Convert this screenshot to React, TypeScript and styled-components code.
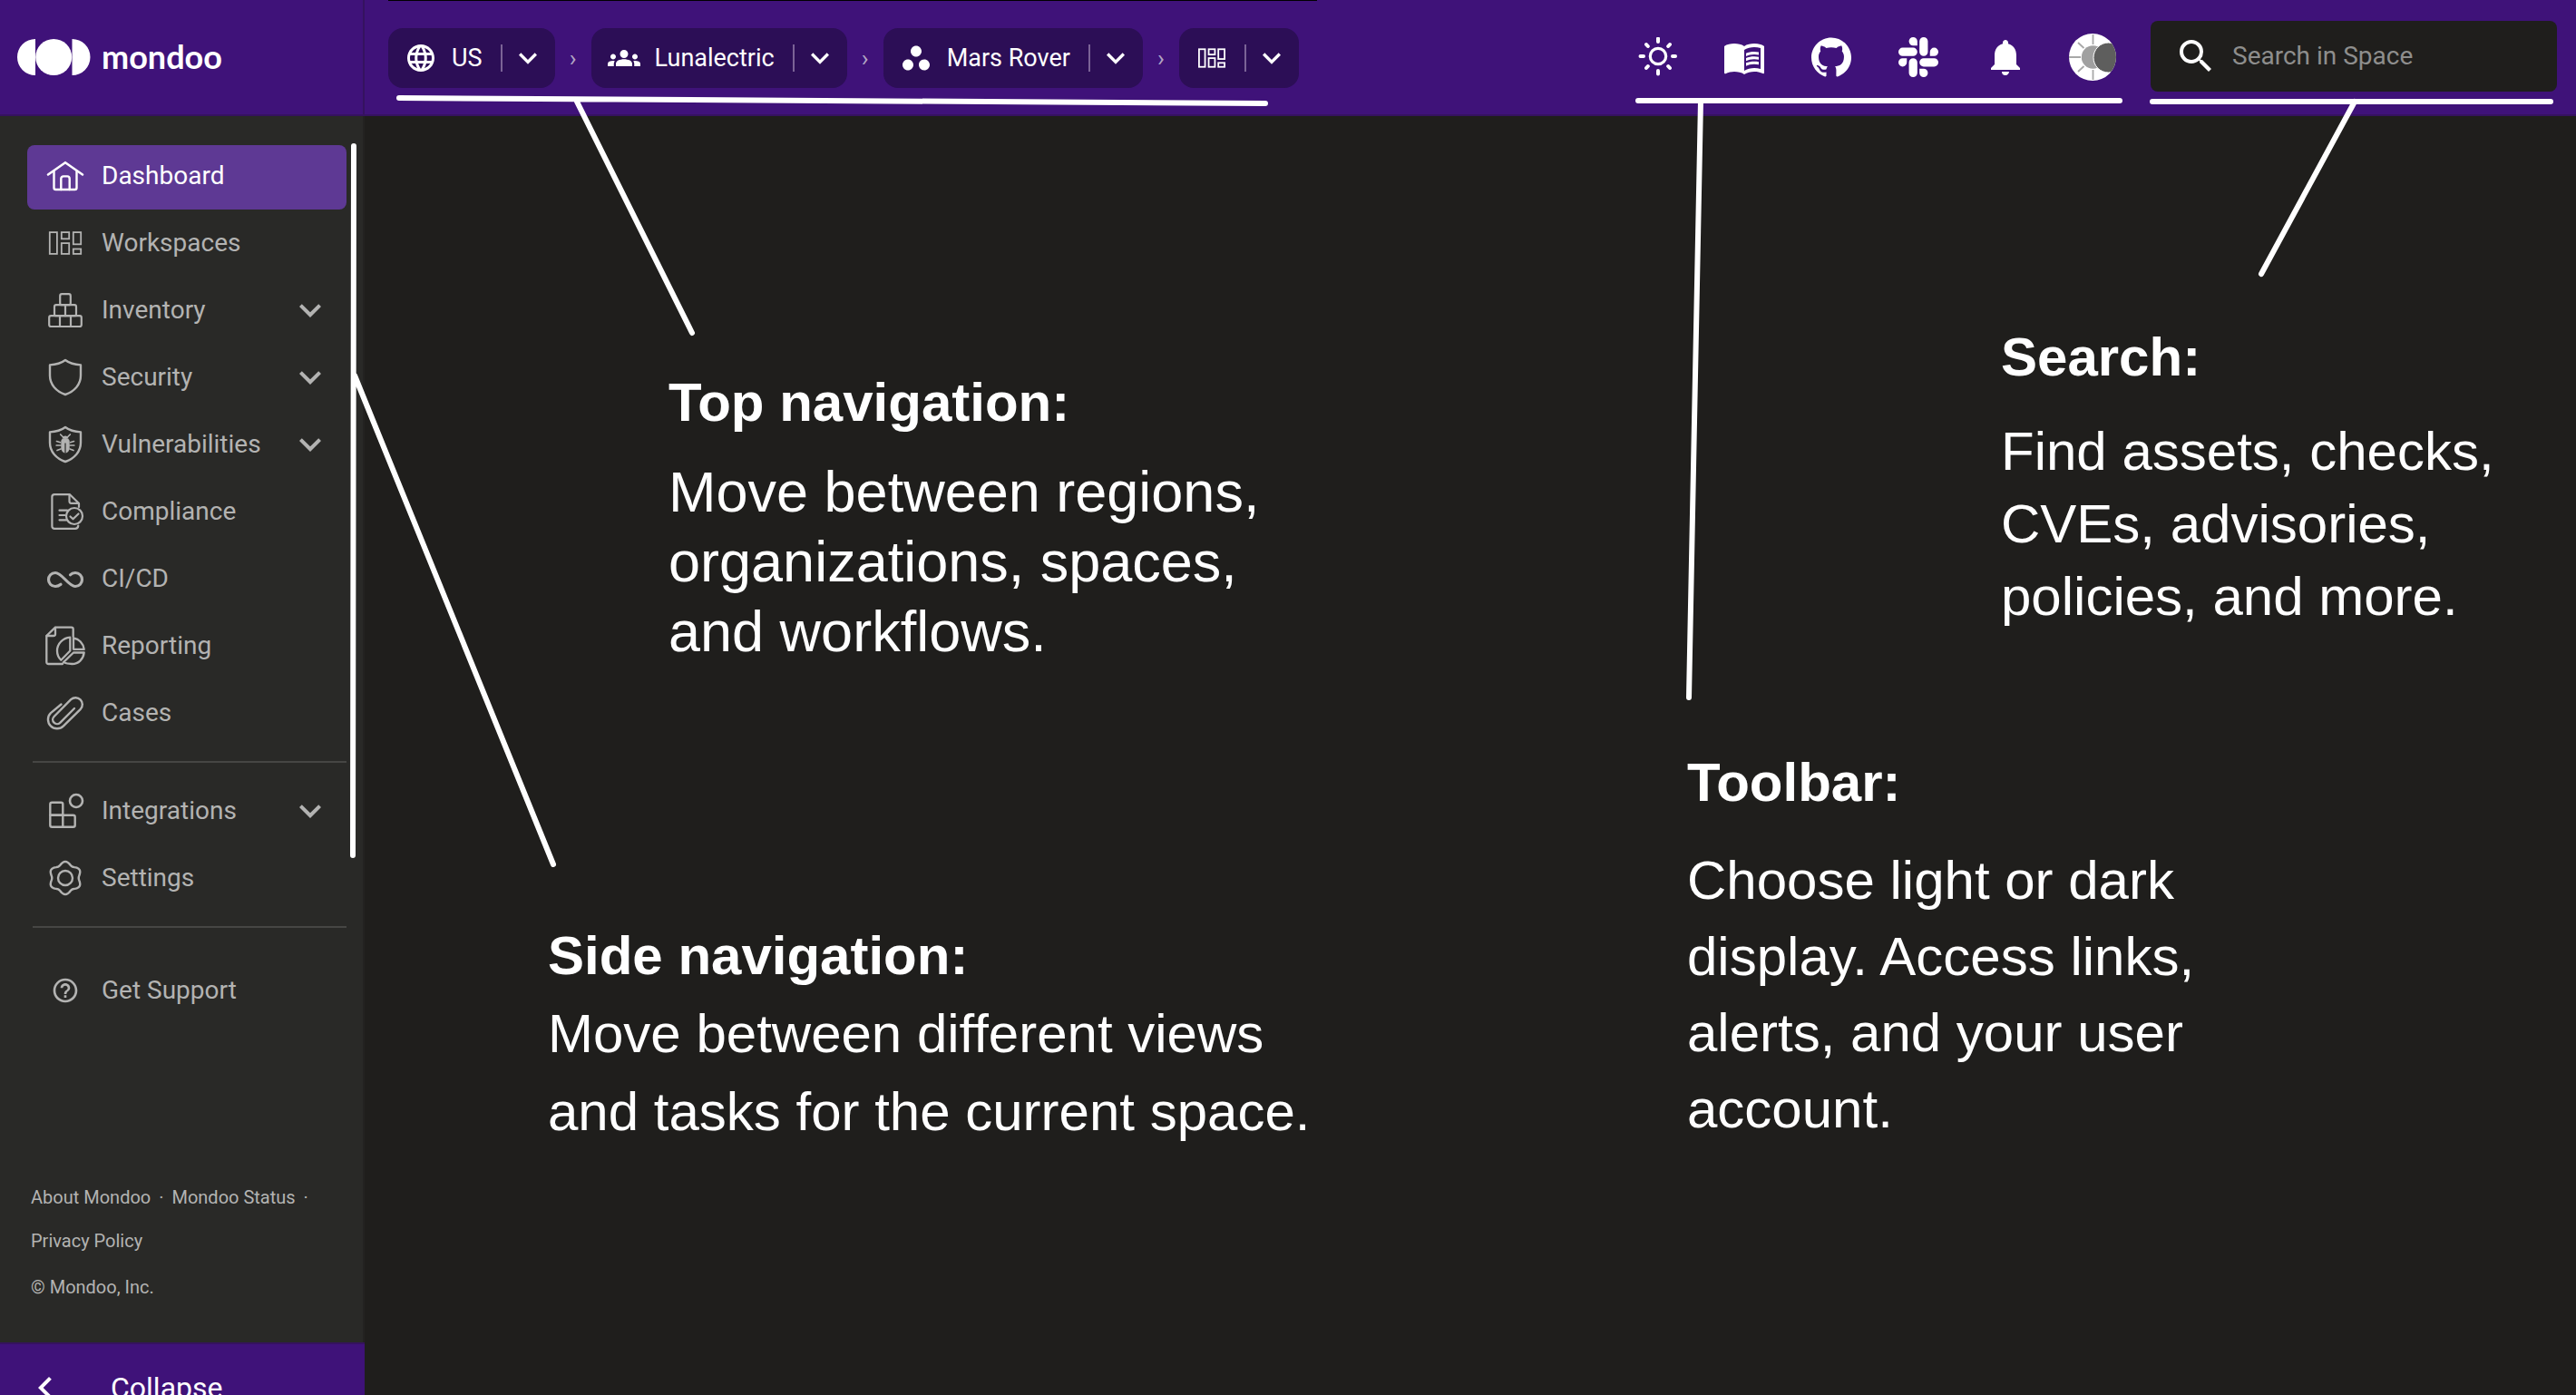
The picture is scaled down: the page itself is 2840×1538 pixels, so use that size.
import React from "react";
import styled, { createGlobalStyle } from "styled-components";
import {
  MdChevronLeft,
  MdExpandMore,
  MdGroups,
  MdHelpOutline,
  MdLanguage,
  MdMenuBook,
  MdNotifications,
  MdSearch,
  MdWorkspaces,
} from "react-icons/md";
import { SiGithub, SiSlack } from "react-icons/si";

const color = {
  brand: "#3f1279",
  brandEdge: "#35125f",
  chip: "#2c0e56",
  active: "#5e3994",
  page: "#1f1e1c",
  side: "#292927",
  rule: "#464644",
  muted: "#b3b3b2",
  hint: "#8e8e8d",
};

const GlobalStyle = createGlobalStyle`
  *, *::before, *::after { box-sizing: border-box; }
  body {
    margin: 0;
    background: ${color.page};
    color: #fff;
    font-family: Roboto, "Liberation Sans", sans-serif;
  }
  button { border: 0; padding: 0; background: none; color: inherit; font: inherit; cursor: pointer; }
  a { color: inherit; text-decoration: none; }
  svg { display: block; flex: none; }
`;

const Shell = styled.div`
  position: relative;
  display: flex;
  flex-direction: column;
  height: 100vh;
  overflow: hidden;
`;

const Header = styled.header`
  display: flex;
  flex: none;
  height: 128px;
  background: ${color.brand};
  border-bottom: 2px solid ${color.brandEdge};
`;

const Brand = styled.a`
  display: flex;
  flex: none;
  align-items: center;
  gap: 12px;
  width: 402px;
  padding-left: 19px;
  border-right: 2px solid ${color.brandEdge};
`;

const BrandName = styled.span`
  padding-bottom: 2px;
  font: 700 36px/40px Lato, sans-serif;
`;

const Breadcrumbs = styled.nav`
  position: relative;
  display: flex;
  align-items: center;
  padding: 2px 20px 0 26px;

  &::before {
    content: "";
    position: absolute;
    top: 0;
    left: 26px;
    right: 0;
    height: 1px;
    background: #000;
  }
`;

const Chip = styled.div`
  display: flex;
  align-items: center;
  height: 66px;
  padding: 0 10px 0 18px;
  border-radius: 16px;
  background: ${color.chip};
`;

const ChipLink = styled.a`
  display: flex;
  align-items: center;
  gap: 16px;
  padding-right: 18px;
  font-size: 27px;
  line-height: 32px;
`;

const ChipText = styled.span`
  padding-right: 2px;
`;

const ChipToggle = styled.button`
  display: flex;
  align-items: center;
  height: 30px;
  padding-left: 8px;
  border-left: 2px solid #7b6396;
`;

const Separator = styled.span`
  width: 40px;
  color: #b2a5c4;
  font-size: 26px;
  line-height: 32px;
  text-align: center;
`;

const Tools = styled.div`
  display: flex;
  align-items: center;
  margin-left: auto;
`;

const ToolButton = styled.button`
  display: flex;
  align-items: center;
  justify-content: center;
  width: 96px;
  height: 96px;
`;

const SearchBox = styled.label`
  display: flex;
  align-items: center;
  align-self: center;
  gap: 16px;
  width: 448px;
  height: 78px;
  margin: 0 21px 2px 16px;
  padding: 0 26px;
  border-radius: 8px;
  background: ${color.page};
`;

const SearchInput = styled.input`
  flex: 1;
  min-width: 0;
  padding: 0;
  border: 0;
  outline: 0;
  background: none;
  color: #fff;
  font: 400 28px/36px Roboto, sans-serif;

  &::placeholder { color: ${color.hint}; opacity: 1; }
`;

const Body = styled.div`
  display: flex;
  flex: 1;
  min-height: 0;
`;

const Sidebar = styled.aside`
  display: flex;
  flex: none;
  flex-direction: column;
  width: 402px;
  border-right: 2px solid #232221;
  background: ${color.side};
`;

const SideNav = styled.nav`
  display: flex;
  flex: none;
  flex-direction: column;
  gap: 3px;
  padding: 32px 18px 0 30px;
`;

const NavItem = styled.a<{ $active?: boolean }>`
  display: flex;
  align-items: center;
  gap: 18px;
  height: 71px;
  padding: 0 16px 3px 20px;
  border-radius: 8px;
  background: ${(p) => (p.$active ? color.active : "transparent")};
  color: ${(p) => (p.$active ? "#fff" : color.muted)};
  font-size: 28px;
  line-height: 32px;
`;

const NavIcon = styled.span`
  display: flex;
  align-items: center;
  justify-content: center;
  width: 44px;
  height: 44px;
`;

const NavLabel = styled.span`
  flex: 1;
`;

const Rule = styled.hr<{ $wide?: boolean }>`
  width: calc(100% - 6px);
  height: 2px;
  margin: 13px 0 ${(p) => (p.$wide ? 32 : 16)}px 6px;
  border: 0;
  background: ${color.rule};
`;

const Legal = styled.footer`
  display: flex;
  flex: none;
  flex-direction: column;
  gap: 3px;
  margin: 167px 0 37px;
  padding: 0 34px;
  color: ${color.muted};
  font-size: 20px;
  line-height: 48px;
`;

const LegalLinks = styled.div`
  display: flex;
  flex-wrap: wrap;
  column-gap: 9px;
`;

const Collapse = styled.button`
  && {
    display: flex;
    flex: none;
    align-items: center;
    gap: 48px;
    width: 402px;
    height: 98px;
    padding-left: 26px;
    border-top: 2px solid ${color.brandEdge};
    background: ${color.brand};
    font-size: 32px;
    line-height: 40px;
  }
`;

const Main = styled.main`
  flex: 1;
  min-width: 0;
  background: ${color.page};
`;

/* Callouts float over the interface they describe. */
const Callout = styled.section<{ $top: number; $left?: number; $right?: number; $line: number; $gap: number; $size?: number }>`
  position: absolute;
  top: ${(p) => p.$top}px;
  ${(p) => (p.$left !== undefined ? `left: ${p.$left}px;` : `right: ${p.$right}px;`)}
  font-family: "Liberation Sans", Arial, sans-serif;
  font-size: ${(p) => p.$size ?? 60}px;
  line-height: ${(p) => p.$line}px;
  white-space: nowrap;

  h2 { margin: 0 0 ${(p) => p.$gap}px; font-size: 60px; font-weight: 700; }
  p { margin: 0; }
`;

const ToolbarCallout = styled(Callout)`
  width: 620px;
`;

const SearchCallout = styled(Callout)`
  width: 600px;
`;

const Pointers = styled.svg<{ $side: "left" | "right" }>`
  position: absolute;
  top: 0;
  ${(p) => p.$side}: 0;
  fill: none;
  stroke: #fff;
  stroke-width: 6;
  stroke-linecap: round;
  pointer-events: none;
`;

const Line = ({ children, width = 2.4 }: { children: React.ReactNode; width?: number }) => (
  <svg width="44" height="44" viewBox="0 0 44 44" fill="none" stroke="currentColor" strokeWidth={width} strokeLinecap="round" strokeLinejoin="round" aria-hidden="true">
    {children}
  </svg>
);

const HomeIcon = () => (
  <Line>
    <path d="M3 20.5 22 7.2 41 20.5" strokeWidth="2.6" />
    <path d="M9.500 17v18a2 2 0 0 0 2 2h21a2 2 0 0 0 2-2V17" />
    <path d="M17.3 37V25a2.6 2.6 0 0 1 2.6-2.6h4.2a2.6 2.6 0 0 1 2.6 2.6v12" />
  </Line>
);

const WorkspaceIcon = ({ size = 44, width = 1.8 }: { size?: number; width?: number }) => (
  <svg width={size} height={size} viewBox="0 0 44 44" fill="none" stroke="currentColor" strokeWidth={width} aria-hidden="true">
    <rect x="4.8" y="10.1" width="8.1" height="23.8" />
    <rect x="17.8" y="10.1" width="8.4" height="7.2" />
    <rect x="17.8" y="22.1" width="8.4" height="11.8" />
    <rect x="30.8" y="10.1" width="8.4" height="13.2" />
    <rect x="30.8" y="28.5" width="8.4" height="5.4" />
  </svg>
);

const InventoryIcon = () => (
  <Line width={2.2}>
    <rect x="16.2" y="4.2" width="11.6" height="12" rx="2" />
    <rect x="10" y="16.2" width="24" height="12" rx="2" />
    <rect x="4.2" y="28.2" width="35.6" height="11.8" rx="2" />
    <path d="M22 16.2v12M16 28.2V40M28 28.2V40" />
  </Line>
);

const shield = "M22 3C26 6 32 8 39 8.4V20c0 10-7 17.500-17 21C12 37.500 5 30 5 20V8.400C12 8 18 6 22 3Z";

const ShieldIcon = () => (
  <Line>
    <path d={shield} />
  </Line>
);

const BugIcon = () => (
  <Line>
    <path d={shield} />
    <path d="M17.300 18.500c0-2.200 2-3.600 4.700-3.600s4.700 1.400 4.700 3.600v7c0 3.500-2 5.500-4.700 6.200-2.700-.7-4.700-2.700-4.700-6.200Z" fill="currentColor" stroke="none" />
    <path d="M18.500 15.500c.4-2 1.700-3 3.500-3s3.100 1 3.500 3Z" fill="currentColor" stroke="none" />
    <path d="m16.700 11 2.500 2.500M27.300 11l-2.500 2.500M12.500 18.500l4 1.200M31.500 18.500l-4 1.200M12.200 23H17M31.800 23H27M13 28.500l4-1.500M31 28.500l-4-1.500" strokeWidth="1.700" />
    <path d="M22 20.500V32" stroke={color.side} strokeWidth="1.200" strokeLinecap="butt" />
  </Line>
);

const ComplianceIcon = () => (
  <Line width={2.2}>
    <path d="M37 17v-4L27 3.200H10a2.600 2.600 0 0 0-2.600 2.600v32.500A2.600 2.600 0 0 0 10 40.900h23c2 0 3-1.200 3.300-3.400" />
    <path d="M26.500 3.500v7.300a2 2 0 0 0 2 2H36.500" />
    <circle cx="32" cy="27" r="9" />
    <path d="m27.500 27.500 3 2.800 6-5.800M15.500 20.700h8.500M15.500 26h6M15.500 31.300h8" />
  </Line>
);

const InfinityIcon = () => (
  <Line width={3.2}>
    <path d="M17 28.300C15 30 13 30.500 11 30.500 6.500 30.500 3.500 27 3.500 23S6.500 15.500 11 15.500C18.500 15.500 25.500 30.500 33 30.500c4.500 0 7.500-3.500 7.500-7.500s-3-7.500-7.500-7.500c-2 0-4 .5-5.500 2.200" />
  </Line>
);

const ReportIcon = () => (
  <Line width={2.3}>
    <path d="M19 42H3.300a2 2 0 0 1-2-2V11L11 1.700h17.700a2 2 0 0 1 2 2V12" />
    <path d="M11 2v7a2 2 0 0 1-2 2H1.500" />
    <path d="M27.300 12.700C19 13.500 13 19.800 13 27.500c0 4 1.500 7.500 4.300 10.300L27.300 27.500Z" />
    <path d="M31 13.500c6.300 1 10.700 5.800 11.700 12.300H31Z" />
    <path d="M31 29.500h11.700C41.700 37 36.500 42 29.500 42c-3.800 0-7-.5-9.700-1.700Z" />
  </Line>
);

const ClipIcon = () => (
  <Line>
    <path d="M17.500 12.500 5.900 22.200A10 10 0 0 0 20 36.400L38.800 17.800A7.500 7.500 0 0 0 28.200 7.200L9.600 26A4.700 4.700 0 0 0 16.200 32.800L32 17" />
  </Line>
);

const IntegrationIcon = () => (
  <Line>
    <path d="M5.300 26.700V14.700a2 2 0 0 1 2-2h10a2 2 0 0 1 2 2v12Z" />
    <path d="M5.300 26.700h25.400a2 2 0 0 1 2 2v9a2 2 0 0 1-2 2H7.300a2 2 0 0 1-2-2ZM19.300 26.700v13" />
    <circle cx="34" cy="11" r="7" strokeWidth="2.600" />
  </Line>
);

const gear =
  Array.from({ length: 73 }, (_, i) => {
    const a = (i / 72) * Math.PI * 2;
    const r = 16.4 + 1.7 * Math.cos(6 * a);
    return `${i ? "L" : "M"}${(22 + r * Math.sin(a)).toFixed(2)} ${(22 - r * Math.cos(a)).toFixed(2)}`;
  }).join("") + "Z";

const GearIcon = () => (
  <Line>
    <path d={gear} />
    <circle cx="22" cy="22" r="8" />
  </Line>
);

const SunIcon = () => (
  <Line width={4}>
    <circle cx="23" cy="21" r="8.700" strokeWidth="3.200" />
    <path d="M23 1.500v3.500M23 37v3.500M3.500 21H7M39 21h3M10 8l1.800 2M36 8l-1.800 2M10 34l1.800-2M36 34l-1.800-2" />
  </Line>
);

const Avatar = () => (
  <svg width="53" height="53" viewBox="0 0 53 53" aria-hidden="true">
    <clipPath id="avatar-disc">
      <circle cx="26" cy="26" r="26" />
    </clipPath>
    <g clipPath="url(#avatar-disc)">
      <rect width="53" height="53" fill="#fff" />
      <path d="M26.500 1v11M26.500 40v11M0 26h13M10 10l6.500 6M10 42l6.500-6" stroke="#a8a8a8" strokeWidth="1.800" />
      <circle cx="26.500" cy="26" r="12.700" fill="#a0a0a0" />
      <circle cx="43.500" cy="26.500" r="16.500" fill="#5e5e5d" stroke="#fff" strokeWidth="1" />
    </g>
  </svg>
);

const Logo = () => (
  <svg width="81" height="40" viewBox="0 0 81 40" fill="#fff" aria-hidden="true">
    <path d="M20 0v40A20 20 0 0 1 20 0ZM60.500 0a20 20 0 0 1 0 40Z" />
    <circle cx="40.200" cy="20" r="20" />
  </svg>
);

const crumbs = [
  { label: "US", icon: <MdLanguage size={36} /> },
  { label: "Lunalectric", icon: <MdGroups size={36} /> },
  { label: "Mars Rover", icon: <MdWorkspaces size={36} /> },
  { label: "", icon: <WorkspaceIcon size={36} width={2.2} /> },
];

type Entry = { label: string; icon: React.ReactNode; active?: boolean; expandable?: boolean };

const primary: Entry[] = [
  { label: "Dashboard", icon: <HomeIcon />, active: true },
  { label: "Workspaces", icon: <WorkspaceIcon /> },
  { label: "Inventory", icon: <InventoryIcon />, expandable: true },
  { label: "Security", icon: <ShieldIcon />, expandable: true },
  { label: "Vulnerabilities", icon: <BugIcon />, expandable: true },
  { label: "Compliance", icon: <ComplianceIcon /> },
  { label: "CI/CD", icon: <InfinityIcon /> },
  { label: "Reporting", icon: <ReportIcon /> },
  { label: "Cases", icon: <ClipIcon /> },
];

const secondary: Entry[] = [
  { label: "Integrations", icon: <IntegrationIcon />, expandable: true },
  { label: "Settings", icon: <GearIcon /> },
];

const tools = [
  { label: "Switch theme", icon: <SunIcon /> },
  { label: "Documentation", icon: <MdMenuBook size={48} /> },
  { label: "GitHub", icon: <SiGithub size={44} /> },
  { label: "Slack", icon: <SiSlack size={44} /> },
  { label: "Notifications", icon: <MdNotifications size={48} /> },
  { label: "Account", icon: <Avatar /> },
];

const Item = ({ label, icon, active, expandable }: Entry) => (
  <NavItem href="#" $active={active} aria-current={active ? "page" : undefined}>
    <NavIcon>{icon}</NavIcon>
    <NavLabel>{label}</NavLabel>
    {expandable && <MdExpandMore size={48} />}
  </NavItem>
);

export default function App() {
  return (
    <>
      <GlobalStyle />
      <Shell>
        <Header>
          <Brand href="#">
            <Logo />
            <BrandName>mondoo</BrandName>
          </Brand>
          <Breadcrumbs aria-label="Breadcrumb">
            {crumbs.map((c, i) => (
              <React.Fragment key={i}>
                {i > 0 && <Separator>›</Separator>}
                <Chip>
                  <ChipLink href="#" aria-label={c.label || "Workspaces"}>
                    {c.icon}
                    {c.label && <ChipText>{c.label}</ChipText>}
                  </ChipLink>
                  <ChipToggle aria-label={`Change ${c.label || "workspace"}`}>
                    <MdExpandMore size={40} />
                  </ChipToggle>
                </Chip>
              </React.Fragment>
            ))}
          </Breadcrumbs>
          <Tools>
            {tools.map((t) => (
              <ToolButton key={t.label} aria-label={t.label}>
                {t.icon}
              </ToolButton>
            ))}
          </Tools>
          <SearchBox>
            <MdSearch size={48} />
            <SearchInput type="text" placeholder="Search in Space" aria-label="Search in Space" />
          </SearchBox>
        </Header>
        <Body>
          <Sidebar>
            <SideNav aria-label="Side navigation">
              {primary.map((e) => (
                <Item key={e.label} {...e} />
              ))}
              <Rule />
              {secondary.map((e) => (
                <Item key={e.label} {...e} />
              ))}
              <Rule $wide />
              <Item label="Get Support" icon={<MdHelpOutline size={32} />} />
            </SideNav>
            <Legal>
              <LegalLinks>
                <a href="#">About Mondoo</a>
                <span>·</span>
                <a href="#">Mondoo Status</a>
                <span>·</span>
                <a href="#">Privacy Policy</a>
              </LegalLinks>
              <span>© Mondoo, Inc.</span>
            </Legal>
            <Collapse>
              <MdChevronLeft size={48} />
              Collapse
            </Collapse>
          </Sidebar>
          <Main />
        </Body>

        <Pointers $side="left" width="1440" height="980" aria-hidden="true">
          <path d="M440 108 1395 114M636 112 763 367M390 161 389 943M391 414 610 953" />
        </Pointers>
        <Pointers $side="right" width="1080" height="800" aria-hidden="true">
          <path d="M46 111H577M115 111 102 769M613 112H1052M836 112 733 302" />
        </Pointers>

        <Callout $top={405} $left={737} $line={77} $gap={22} $size={63}>
          <h2>Top navigation:</h2>
          <p>
            Move between regions,
            <br />
            organizations, spaces,
            <br />
            and workflows.
          </p>
        </Callout>
        <Callout $top={1011} $left={604} $line={86} $gap={0}>
          <h2>Side navigation:</h2>
          <p>
            Move between different views
            <br />
            and tasks for the current space.
          </p>
        </Callout>
        <ToolbarCallout $top={821} $right={360} $line={84} $gap={24}>
          <h2>Toolbar:</h2>
          <p>
            Choose light or dark
            <br />
            display. Access links,
            <br />
            alerts, and your user
            <br />
            account.
          </p>
        </ToolbarCallout>
        <SearchCallout $top={354} $right={34} $line={80} $gap={24}>
          <h2>Search:</h2>
          <p>
            Find assets, checks,
            <br />
            CVEs, advisories,
            <br />
            policies, and more.
          </p>
        </SearchCallout>
      </Shell>
    </>
  );
}
